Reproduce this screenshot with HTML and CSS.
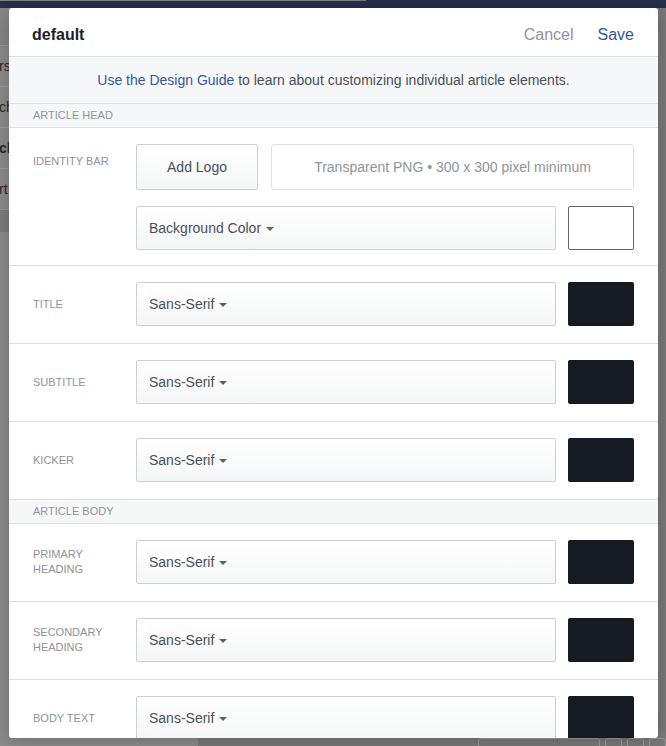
FILE: index.html
```html
<!DOCTYPE html>
<html>
<head>
<meta charset="utf-8">
<link rel="stylesheet" href="styles.css">
</head>
<body>
<div class="page">
  <div class="topbar"><div class="tab"></div></div>
  <div class="main">
    <aside class="side">
      <div class="side-top"></div>
      <div class="side-item">rs</div>
      <div class="side-item">ch</div>
      <div class="side-item bold">cl</div>
      <div class="side-item">rt</div>
      <div class="side-band"></div>
    </aside>
    <div class="content">
      <div class="spacer"></div>
      <div class="toolbar">
        <div class="tb-input"></div>
        <div class="tb-btn"></div>
        <div class="tb-btn"></div>
        <div class="tb-btn"></div>
      </div>
    </div>
  </div>
</div>

<div class="modal">
  <div class="mhead">
    <div class="mtitle">default</div>
    <span class="cancel">Cancel</span>
    <span class="save">Save</span>
  </div>
  <div class="info"><span class="link">Use the Design Guide</span> to learn about customizing individual article elements.</div>

  <div class="section">ARTICLE HEAD</div>

  <div class="row identity">
    <div class="label top">IDENTITY BAR</div>
    <div class="stack">
      <div class="controls">
        <div class="btn">Add Logo</div>
        <div class="png">Transparent PNG • 300 x 300 pixel minimum</div>
      </div>
      <div class="controls second">
        <div class="select">Background Color<span class="caret"></span></div>
        <div class="swatch light"></div>
      </div>
    </div>
  </div>

  <div class="row">
    <div class="label">TITLE</div>
    <div class="controls">
      <div class="select">Sans-Serif<span class="caret"></span></div>
      <div class="swatch"></div>
    </div>
  </div>

  <div class="row">
    <div class="label">SUBTITLE</div>
    <div class="controls">
      <div class="select">Sans-Serif<span class="caret"></span></div>
      <div class="swatch"></div>
    </div>
  </div>

  <div class="row">
    <div class="label">KICKER</div>
    <div class="controls">
      <div class="select">Sans-Serif<span class="caret"></span></div>
      <div class="swatch"></div>
    </div>
  </div>

  <div class="section">ARTICLE BODY</div>

  <div class="row">
    <div class="label">PRIMARY<br>HEADING</div>
    <div class="controls">
      <div class="select">Sans-Serif<span class="caret"></span></div>
      <div class="swatch"></div>
    </div>
  </div>

  <div class="row">
    <div class="label">SECONDARY<br>HEADING</div>
    <div class="controls">
      <div class="select">Sans-Serif<span class="caret"></span></div>
      <div class="swatch"></div>
    </div>
  </div>

  <div class="row">
    <div class="label">BODY TEXT</div>
    <div class="controls">
      <div class="select">Sans-Serif<span class="caret"></span></div>
      <div class="swatch"></div>
    </div>
  </div>
</div>
</body>
</html>
```

FILE: styles.css
```css
html, body {
  margin: 0;
  padding: 0;
}
body {
  width: 666px;
  height: 746px;
  overflow: hidden;
  background: #7b7b7b;
  font-family: "Liberation Sans", Arial, Helvetica, sans-serif;
  position: relative;
}

/* dimmed page behind the dialog */
.page {
  display: flex;
  flex-direction: column;
  height: 746px;
}
.topbar {
  height: 8px;
  background: #25304e;
  display: flex;
}
.tab {
  width: 366px;
  height: 1px;
  background: #808080;
}
.main {
  flex: 1;
  display: flex;
}
.side {
  width: 200px;
  background: #8c8c8c;
  display: flex;
  flex-direction: column;
}
.side-top {
  height: 37px;
  border-bottom: 1px solid #9a9a9a;
  background: #878787;
}
.side-item {
  height: 40px;
  border-bottom: 1px solid #9a9a9a;
  display: flex;
  align-items: center;
  font-size: 14px;
  color: #2a2a2a;
  margin-left: -1px;
}
.side-item.bold {
  font-weight: bold;
}
.side-band {
  height: 22px;
  background: #7d7d7d;
}
.content {
  flex: 1;
  display: flex;
  flex-direction: column;
  background: #7a7a7a;
}
.spacer {
  flex: 1;
}
.toolbar {
  display: flex;
  gap: 5px;
  padding-left: 280px;
  margin-bottom: -14px;
}
.tb-input {
  width: 120px;
  height: 20px;
  border: 1px solid #9b9b9b;
  border-radius: 3px;
}
.tb-btn {
  width: 15px;
  height: 20px;
  border: 1px solid #9b9b9b;
  border-radius: 3px;
}

/* dialog */
.modal {
  position: absolute;
  left: 9px;
  top: 8px;
  width: 649px;
  height: 730px;
  background: #fff;
  border-radius: 3px;
  overflow: hidden;
  box-shadow: 0 2px 20px rgba(0, 0, 0, 0.25);
}
.mhead {
  height: 48px;
  box-sizing: border-box;
  border-bottom: 1px solid #dddfe2;
  display: flex;
  align-items: center;
  padding: 5px 24px 0 23px;
  font-size: 16px;
}
.mhead {
  height: 49px;
}
.mtitle {
  flex: 1;
  font-weight: bold;
  color: #1d2129;
}
.cancel {
  color: #8d949e;
  margin-right: 24px;
}
.save {
  color: #365899;
}
.info {
  height: 46px;
  line-height: 47px;
  background: #f6f7f9;
  border-bottom: 1px solid #dddfe2;
  text-align: center;
  font-size: 14px;
  color: #4b4f56;
}
.link {
  color: #365899;
}
.section {
  height: 23px;
  line-height: 23px;
  background: #f6f7f9;
  border-bottom: 1px solid #dddfe2;
  padding-left: 24px;
  font-size: 11px;
  color: #90949c;
}
.row {
  display: grid;
  grid-template-columns: 103px 1fr;
  padding: 16px 24px 17px 24px;
  border-bottom: 1px solid #dddfe2;
}
.row.identity {
  padding-bottom: 15px;
}
.label {
  align-self: center;
  font-size: 11px;
  line-height: 15px;
  color: #8d929a;
}
.label.top {
  align-self: start;
  padding-top: 10px;
}
.stack {
  display: flex;
  flex-direction: column;
}
.controls {
  display: flex;
  gap: 12px;
}
.controls.second {
  margin-top: 16px;
}
.btn {
  width: 122px;
  height: 46px;
  box-sizing: border-box;
  border: 1px solid #ccd0d5;
  border-radius: 2px;
  background: linear-gradient(#ffffff, #f5f6f7);
  display: flex;
  align-items: center;
  justify-content: center;
  font-size: 14px;
  color: #4b4f56;
  margin-right: 1px;
}
.png {
  flex: 1;
  height: 46px;
  box-sizing: border-box;
  border: 1px solid #dddfe2;
  border-radius: 3px;
  display: flex;
  align-items: center;
  justify-content: center;
  font-size: 14px;
  color: #90949c;
}
.select {
  flex: 1;
  height: 44px;
  box-sizing: border-box;
  border: 1px solid #ccd0d5;
  border-radius: 2px;
  background: linear-gradient(#ffffff, #f5f6f7);
  display: flex;
  align-items: center;
  padding: 0 12px;
  font-size: 14px;
  color: #4b4f56;
}
.caret {
  width: 0;
  height: 0;
  border-left: 4px solid transparent;
  border-right: 4px solid transparent;
  border-top: 4px solid #5d6168;
  margin-left: 5px;
  margin-top: 1px;
}
.swatch {
  width: 66px;
  height: 44px;
  box-sizing: border-box;
  border-radius: 2px;
  background: #161a23;
}
.swatch.light {
  background: #fff;
  border: 1px solid #5f646c;
}
```
